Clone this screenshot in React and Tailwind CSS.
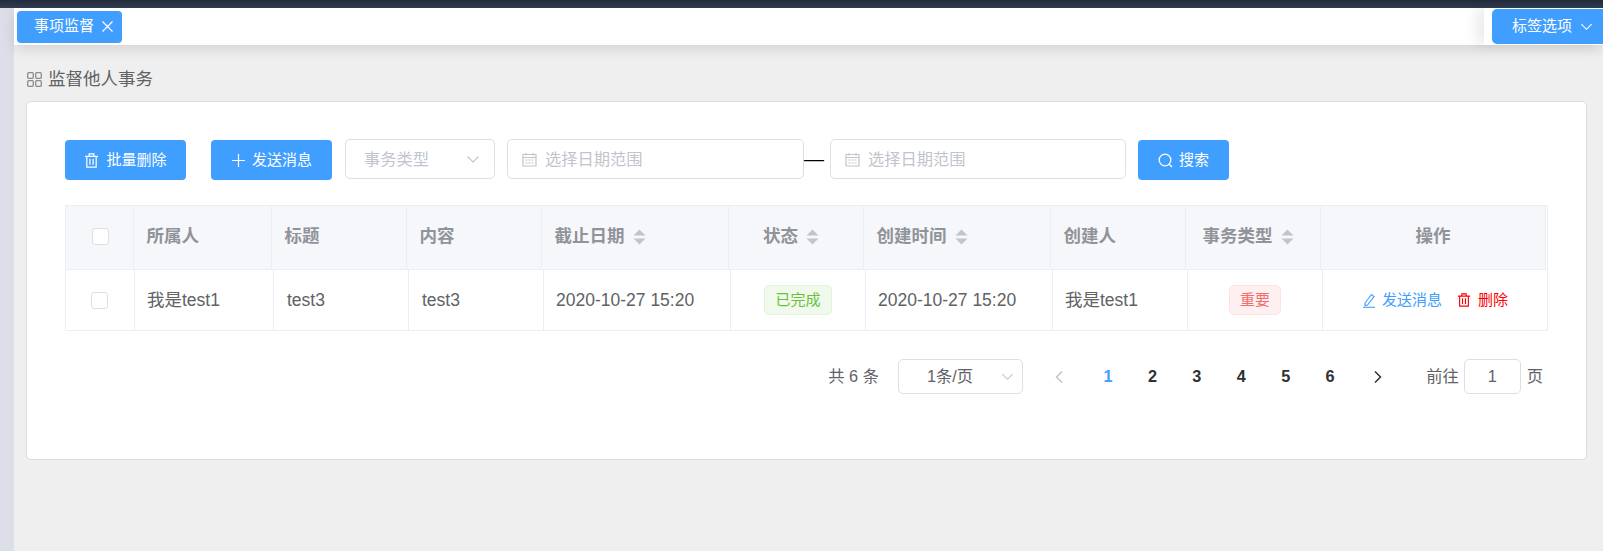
const Caret = () => (
  <svg className="ml-[8px] mr-[10px] shrink-0" width="13" height="16" viewBox="0 0 13 16">
    <path d="M6.5 0.5L12.5 6.5H0.5Z" fill="#c0c4cc" />
    <path d="M6.5 15.5L12.5 9.5H0.5Z" fill="#c0c4cc" />
  </svg>
);

const Trash = ({ color = "#fff", size = 15 }) => (
  <svg width={size} height={size} viewBox="0 0 16 16" fill="none" stroke={color} strokeWidth="1.3" className="shrink-0">
    <path d="M1 3.5H15M5.5 3.5V1H10.5V3.5M3 3.5V15H13V3.5M6.3 6V12.5M9.7 6V12.5" />
  </svg>
);

const Chevron = ({ color = "#c0c4cc", size = 14 }) => (
  <svg width={size} height={size} viewBox="0 0 14 14" fill="none" stroke={color} strokeWidth="1.2" className="shrink-0">
    <path d="M1.5 4.5L7 10L12.5 4.5" />
  </svg>
);

const DateIcon = () => (
  <svg width="15" height="15" viewBox="0 0 15 15" fill="none" stroke="#c0c4cc" strokeWidth="1.2" className="shrink-0">
    <path d="M1 2.5H14V14H1ZM1 5.5H14M4 1V3.5M11 1V3.5" />
    <path d="M3.5 8H11.5M3.5 11H11.5" strokeDasharray="2 1" />
  </svg>
);

const Btn = ({ w, icon, children, extra = "", gap = "gap-[7px]" }) => (
  <button className={`mt-px flex h-10 items-center justify-center rounded-[4px] bg-[#409eff] text-[15px] text-white ${gap} ${w} ${extra}`}>
    {icon}
    <span>{children}</span>
  </button>
);

const Check = ({ extra = "" }) => (
  <span className={`block h-[17px] w-[17px] rounded-[3px] border border-[#dcdfe6] bg-white ${extra}`} />
);

const DateInput = ({ w }) => (
  <div className={`flex h-10 items-center gap-[8px] rounded-[5px] border border-[#dcdfe6] bg-white pl-[14px] text-[16.25px] text-[#c0c4cc] ${w}`}>
    <DateIcon />
    <span>选择日期范围</span>
  </div>
);

const Head = ({ children, sort, center }) => (
  <div className={`flex items-center border-r border-[#ebeef5] bg-[#f5f7fa] pb-[2px] text-[17.5px] font-bold text-[#909399] ${center ? "justify-center" : "pl-[12.5px]"}`}>
    <span>{children}</span>
    {sort && <Caret />}
  </div>
);

const Cell = ({ children, center, pad = "pl-[12px]" }) => (
  <div className={`flex items-center border-r border-[#ebeef5] text-[17.5px] text-[#606266] last:border-r-0 ${center ? "justify-center" : pad}`}>
    {children}
  </div>
);

const Tag = ({ className, children }) => (
  <span className={`flex h-[30px] items-center justify-center rounded-[5px] border text-[15px] ${className}`}>{children}</span>
);

export default function App() {
  return (
    <div className="flex h-[551px] w-[1603px] flex-col overflow-hidden bg-[#efefef] font-['Liberation_Sans','Noto_Sans_CJK_SC',sans-serif]">
      <div className="h-2 shrink-0 bg-gradient-to-b from-[#222c3c] to-[#333e52]" />
      <div className="flex min-h-0 flex-1">
        <div className="w-[14px] shrink-0 bg-[#dcdfe8]" />
        <div className="flex min-w-0 flex-1 flex-col">
          <div className="relative flex h-[37px] shrink-0 items-center justify-between bg-white shadow-[0_4px_14px_rgba(0,0,0,0.12)]">
            <button className="ml-[3px] flex h-8 w-[105px] items-center rounded-[4px] bg-[#409eff] pl-[17px] text-[15px] text-white">
              <span>事项监督</span>
              <svg className="ml-[8px]" width="11" height="11" viewBox="0 0 11 11" fill="none" stroke="#fff" strokeWidth="1.2">
                <path d="M0.5 0.5L10.5 10.5M10.5 0.5L0.5 10.5" />
              </svg>
            </button>
            <div className="flex h-[37px] w-[119px] items-center justify-end bg-white shadow-[-8px_0_14px_rgba(0,0,0,0.08)]">
              <button className="flex h-[35px] w-[111px] items-center rounded-l-[5px] bg-[#409eff] pl-[20px] text-[15px] text-white">
                <span>标签选项</span>
                <span className="ml-2"><Chevron color="#fff" size={13} /></span>
              </button>
            </div>
          </div>

          <div className="flex h-[56px] shrink-0 items-center gap-[6px] pl-[13px] pt-[12px] text-[17.5px] text-[#606266]">
            <svg width="15" height="15" viewBox="0 0 15 15" fill="none" stroke="#8a8a8a" strokeWidth="1.3">
              <rect x="0.7" y="0.7" width="5.6" height="5.6" rx="1" />
              <rect x="8.7" y="0.7" width="5.6" height="5.6" rx="1" />
              <rect x="0.7" y="8.7" width="5.6" height="5.6" rx="1" />
              <rect x="8.7" y="8.7" width="5.6" height="5.6" rx="1" />
            </svg>
            <span>监督他人事务</span>
          </div>

          <div className="ml-3 mr-4 h-[359px] shrink-0 rounded-[5px] border border-[#dddddd] bg-white pl-[38px] pr-[38px] pt-[37px]">
            <div className="flex h-[41px] items-start">
              <Btn w="w-[121px]" icon={<Trash />}>批量删除</Btn>
              <Btn w="w-[121px]" extra="ml-[25px] pl-[1px]" icon={
                <svg width="13" height="13" viewBox="0 0 13 13" fill="none" stroke="#fff" strokeWidth="1.2"><path d="M6.5 0V13M0 6.5H13" /></svg>
              }>发送消息</Btn>
              <div className="ml-[13px] flex h-10 w-[150px] items-center justify-between rounded-[5px] border border-[#dcdfe6] pl-[18px] pr-[14px] text-[16.25px] text-[#c0c4cc]">
                <span>事务类型</span>
                <Chevron />
              </div>
              <DateInput w="ml-3 w-[297px]" />
              <span className="flex h-10 w-[26px] items-center text-[20px] leading-none text-black">—</span>
              <DateInput w="w-[296px]" />
              <Btn w="ml-[12px] w-[91px]" gap="gap-[6px]" icon={
                <svg width="15" height="15" viewBox="0 0 15 15" fill="none" stroke="#fff" strokeWidth="1.3"><circle cx="7" cy="7" r="5.8" /><path d="M11.2 11.2L14 14" /></svg>
              }>搜索</Btn>
            </div>

            <div className="mt-[25px] border border-[#ebeef5] text-[17.5px]">
              <div className="grid h-[64px] grid-cols-[68px_138px_135px_135px_187px_135px_187px_135px_135px_225px] border-b border-[#ebeef5]">
                <div className="flex items-center justify-center border-r border-[#ebeef5] bg-[#f5f7fa] pb-[2px]"><Check extra="translate-x-[1px]" /></div>
                <Head>所属人</Head>
                <Head>标题</Head>
                <Head>内容</Head>
                <Head sort>截止日期</Head>
                <Head sort center>状态</Head>
                <Head sort>创建时间</Head>
                <Head>创建人</Head>
                <Head sort center>事务类型</Head>
                <Head center>操作</Head>
              </div>
              <div className="grid h-[60px] grid-cols-[69px_139px_135px_135px_187px_135px_187px_135px_135px_1fr]">
                <Cell center><Check extra="-translate-x-[1px]" /></Cell>
                <Cell>我是test1</Cell>
                <Cell pad="pl-[13px]">test3</Cell>
                <Cell pad="pl-[13px]">test3</Cell>
                <Cell>2020-10-27 15:20</Cell>
                <Cell center><Tag className="w-[68px] border-[#e1f3d8] bg-[#f0f9eb] text-[#67c23a]">已完成</Tag></Cell>
                <Cell>2020-10-27 15:20</Cell>
                <Cell>我是test1</Cell>
                <Cell center><Tag className="w-[52px] border-[#fde2e2] bg-[#fef0f0] text-[#f56c6c]">重要</Tag></Cell>
                <Cell center>
                  <span className="flex items-center text-[15px]">
                    <svg className="mr-[6px]" width="14" height="15" viewBox="0 0 14 15" fill="none" stroke="#409eff" strokeWidth="1.1">
                      <path d="M3 10L9.5 1.5L12 3.5L5.5 12L3 12.5Z" /><path d="M1 14.3H13" />
                    </svg>
                    <span className="text-[#409eff]">发送消息</span>
                    <span className="ml-[15px] mr-[7px]"><Trash color="#ff0000" size={14} /></span>
                    <span className="text-[#ff0000]">删除</span>
                  </span>
                </Cell>
              </div>
            </div>

            <div className="mt-7 flex h-[35px] items-center justify-end pr-[5px] text-[16.25px] text-[#606266]">
              <span>共 6 条</span>
              <div className="ml-[19px] flex h-[35px] w-[125px] items-center justify-between rounded-[5px] border border-[#dcdfe6] pl-[28px] pr-[8px]">
                <span>1条/页</span>
                <Chevron size={13} />
              </div>
              <div className="ml-[13px] flex w-[50px] justify-center pr-[3px]">
                <svg width="10" height="14" viewBox="0 0 10 14" fill="none" stroke="#c0c4cc" strokeWidth="1.5"><path d="M8 1.5L2.5 7L8 12.5" /></svg>
              </div>
              {[1, 2, 3, 4, 5, 6].map((n) => (
                <span key={n} className={`w-[44.4px] text-center font-bold ${n === 1 ? "text-[#409eff]" : "text-[#303133]"}`}>{n}</span>
              ))}
              <div className="flex w-[50px] justify-center pl-[2px]">
                <svg width="10" height="14" viewBox="0 0 10 14" fill="none" stroke="#303133" strokeWidth="1.5"><path d="M2 1.5L7.5 7L2 12.5" /></svg>
              </div>
              <span className="ml-[24px]">前往</span>
              <div className="ml-[5px] flex h-[35px] w-[57px] items-center justify-center rounded-[5px] border border-[#dcdfe6]">1</div>
              <span className="ml-[6px]">页</span>
            </div>
          </div>
        </div>
      </div>
    </div>
  );
}
